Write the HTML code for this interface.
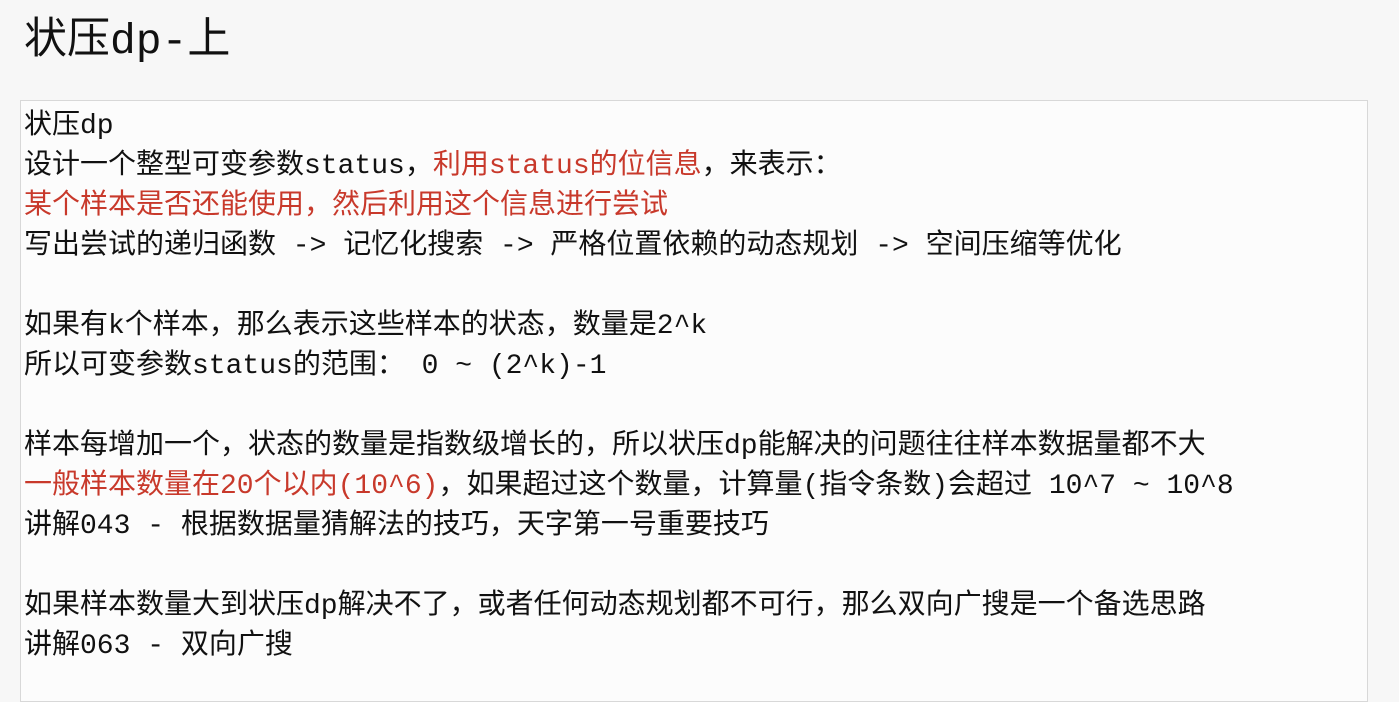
<!DOCTYPE html><html><head><meta charset="utf-8"><style>
body{margin:0;width:1399px;height:681px;background:#f7f7f7;overflow:hidden;font-family:"Liberation Mono","Noto Sans CJK SC",monospace;color:#111}
h1{position:absolute;left:24px;top:16px;margin:0;font-size:43px;font-weight:normal;line-height:52px}
.box{position:absolute;left:20px;top:100px;width:1346px;height:600px;border:1px solid #d8d8d8;background:#fcfcfc}
.t{position:absolute;left:3px;top:6px;font-size:28px;line-height:40px;white-space:pre}
.r{color:#c8392b}
</style></head><body>
<h1>状压dp-上</h1>
<div class="box"><div class="t">状压dp
设计一个整型可变参数status，<span class="r">利用status的位信息</span>，来表示：
<span class="r">某个样本是否还能使用，然后利用这个信息进行尝试</span>
写出尝试的递归函数 -> 记忆化搜索 -> 严格位置依赖的动态规划 -> 空间压缩等优化

如果有k个样本，那么表示这些样本的状态，数量是2^k
所以可变参数status的范围： 0 ~ (2^k)-1

样本每增加一个，状态的数量是指数级增长的，所以状压dp能解决的问题往往样本数据量都不大
<span class="r">一般样本数量在20个以内(10^6)</span>，如果超过这个数量，计算量(指令条数)会超过 10^7 ~ 10^8
讲解043 - 根据数据量猜解法的技巧，天字第一号重要技巧

如果样本数量大到状压dp解决不了，或者任何动态规划都不可行，那么双向广搜是一个备选思路
讲解063 - 双向广搜</div></div>
</body></html>
